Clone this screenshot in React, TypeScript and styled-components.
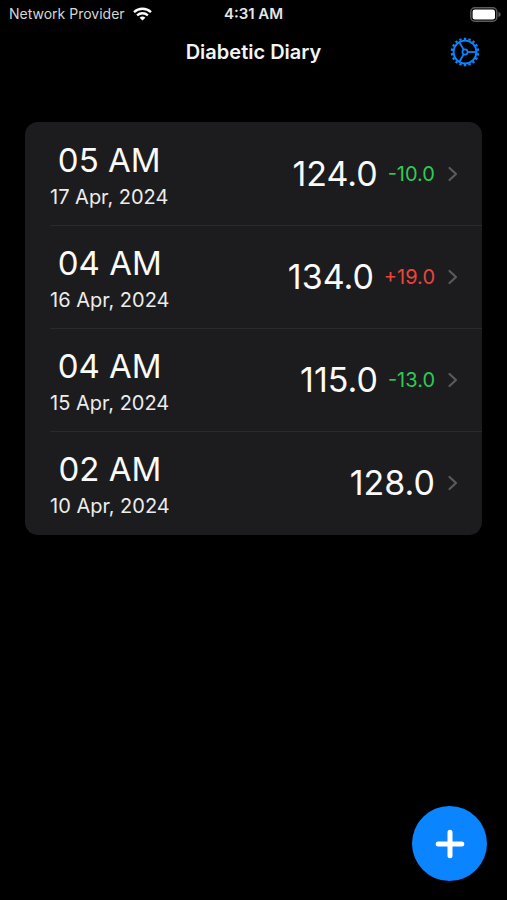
import React from "react";
import styled, { createGlobalStyle } from "styled-components";

const GlobalStyle = createGlobalStyle`
  *, *::before, *::after { box-sizing: border-box; }
  body {
    margin: 0;
    background: #000;
    color: #fff;
    font-family: Inter, "Liberation Sans", sans-serif;
  }
  button { font: inherit; color: inherit; border: 0; background: none; padding: 0; cursor: pointer; }
`;

const Screen = styled.div`
  display: flex;
  flex-direction: column;
  min-height: 100vh;
`;

const StatusBar = styled.div`
  display: grid;
  grid-template-columns: 1fr auto 1fr;
  align-items: center;
  height: 28px;
  padding: 0 6px;
  font-size: 14px;
  line-height: 20px;
`;

const Carrier = styled.div`
  display: flex;
  align-items: center;
  gap: 8px;
  padding-left: 3px;
  color: #d6d6d6;
  white-space: nowrap;
`;

const Clock = styled.time`
  font-size: 15px;
  font-weight: 600;
  color: #e6e6e6;
`;

const Battery = styled.svg`
  justify-self: end;
`;

const NavBar = styled.header`
  display: grid;
  grid-template-columns: 1fr auto 1fr;
  align-items: center;
  height: 48px;
  padding: 0 27px;
`;

const Title = styled.h1`
  grid-column: 2;
  margin: 0;
  font-size: 20px;
  line-height: 24px;
  font-weight: 600;
  color: #f4f4f4;
`;

const SettingsButton = styled.button`
  display: flex;
  justify-self: end;
  color: #0a84ff;
`;

const Entries = styled.ul`
  list-style: none;
  margin: 46px 25px 0;
  padding: 1px 0 0;
  border-radius: 13px;
  background: #1c1c1e;
  overflow: hidden;
`;

const Entry = styled.li`
  padding-left: 25px;
`;

const EntryButton = styled.button<{ $divided: boolean }>`
  display: flex;
  align-items: center;
  width: 100%;
  min-height: 103px;
  padding: 0 23px 0 0;
  border-bottom: 1px solid ${(p) => (p.$divided ? "#2a2a2c" : "transparent")};
`;

const When = styled.span`
  display: flex;
  flex-direction: column;
  align-items: center;
  margin-right: auto;
  padding-top: 2px;
`;

const Hour = styled.span`
  font-size: 33px;
  line-height: 44px;
  color: #fafafa;
`;

const Day = styled.span`
  font-size: 20px;
  line-height: 30px;
  color: #ececec;
`;

const Reading = styled.span`
  font-size: 34px;
  line-height: 44px;
  color: #fafafa;
`;

const Change = styled.span<{ $rising: boolean }>`
  margin-left: 10px;
  font-size: 20px;
  line-height: 30px;
  color: ${(p) => (p.$rising ? "#e8453c" : "#2fc956")};
`;

const Chevron = styled.svg`
  margin-left: 12px;
`;

const Footer = styled.footer`
  display: flex;
  justify-content: flex-end;
  margin-top: auto;
  padding: 20px 20px 19px;
`;

const AddButton = styled.button`
  display: flex;
  align-items: center;
  justify-content: center;
  width: 75px;
  height: 75px;
  border-radius: 50%;
  background: #0a84ff;
`;

const entries = [
  { hour: "05 AM", day: "17 Apr, 2024", reading: "124.0", change: "-10.0" },
  { hour: "04 AM", day: "16 Apr, 2024", reading: "134.0", change: "+19.0" },
  { hour: "04 AM", day: "15 Apr, 2024", reading: "115.0", change: "-13.0" },
  { hour: "02 AM", day: "10 Apr, 2024", reading: "128.0" },
];

const teeth = Array.from({ length: 18 }, (_, i) => i * 20 + 10);

function GearIcon() {
  return (
    <svg width="30" height="30" viewBox="-15 -15 30 30" fill="none" stroke="currentColor" aria-hidden="true">
      <circle r="11.4" strokeWidth="1.9" />
      {teeth.map((angle) => (
        <path key={angle} d="M12 0H14.3" strokeWidth="2.4" transform={`rotate(${angle})`} />
      ))}
      <circle r="2.6" strokeWidth="1.7" />
      {[0, 120, 240].map((angle) => (
        <path key={angle} d="M3 0H11" strokeWidth="1.8" transform={`rotate(${angle})`} />
      ))}
    </svg>
  );
}

function WifiIcon() {
  return (
    <svg width="19" height="14" viewBox="0 0 19 14" fill="none" stroke="#fff" strokeWidth="2.3" aria-hidden="true">
      <path d="M1 5.1C5.8 .6 13.2 .6 18 5.1" />
      <path d="M4.1 8.4C7.2 5.5 11.8 5.5 14.9 8.4" />
      <path d="M9.5 13.6 6.6 10.7C8.2 9.2 10.8 9.2 12.4 10.7Z" fill="#fff" stroke="none" />
    </svg>
  );
}

export default function App() {
  return (
    <Screen>
      <GlobalStyle />
      <StatusBar>
        <Carrier>
          Network Provider
          <WifiIcon />
        </Carrier>
        <Clock>4:31 AM</Clock>
        <Battery width="31" height="15" viewBox="0 0 31 15" role="img" aria-label="Battery full">
          <rect x="0.8" y="0.8" width="26" height="13.4" rx="4" fill="none" stroke="#5c5c5c" strokeWidth="1.4" />
          <rect x="2.6" y="2.6" width="22.4" height="9.8" rx="2.2" fill="#fff" />
          <path d="M28.4 5C31.4 6 31.4 9 28.4 10Z" fill="#5c5c5c" />
        </Battery>
      </StatusBar>
      <NavBar>
        <Title>Diabetic Diary</Title>
        <SettingsButton type="button" aria-label="Settings">
          <GearIcon />
        </SettingsButton>
      </NavBar>
      <main>
        <Entries>
          {entries.map((entry, i) => (
            <Entry key={entry.day}>
              <EntryButton type="button" $divided={i < entries.length - 1}>
                <When>
                  <Hour>{entry.hour}</Hour>
                  <Day>{entry.day}</Day>
                </When>
                <Reading>{entry.reading}</Reading>
                {entry.change && <Change $rising={entry.change.startsWith("+")}>{entry.change}</Change>}
                <Chevron width="12" height="18" viewBox="0 0 12 18" fill="none" stroke="#5a5a5e" strokeWidth="2.2" strokeLinecap="round" strokeLinejoin="round" aria-hidden="true">
                  <path d="M2.5 3 9 9 2.5 15" />
                </Chevron>
              </EntryButton>
            </Entry>
          ))}
        </Entries>
      </main>
      <Footer>
        <AddButton type="button" aria-label="Add entry">
          <svg width="30" height="30" viewBox="0 0 30 30" stroke="#fff" strokeWidth="5" strokeLinecap="round" aria-hidden="true">
            <path d="M15 3.2V26.8M3.2 15H26.8" />
          </svg>
        </AddButton>
      </Footer>
    </Screen>
  );
}
